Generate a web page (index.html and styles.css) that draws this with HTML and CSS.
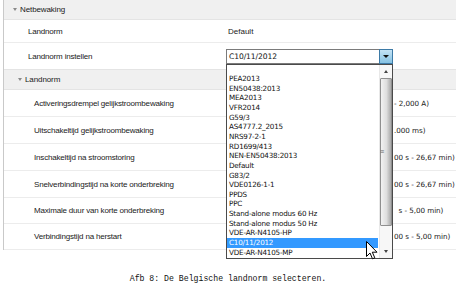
FILE: index.html
```html
<!DOCTYPE html>
<html lang="nl">
<head>
    <meta charset="UTF-8">
    <title>Netbewaking</title>
    <link rel="stylesheet" href="styles.css">
</head>
<body>
    <div class="panel">
        <div class="group-head"><span class="caret"></span>Netbewaking</div>
        <div class="row first">
            <div class="label">Landnorm</div>
            <div class="value">Default</div>
        </div>
        <div class="row combo-row">
            <div class="label">Landnorm instellen</div>
            <div class="value">
                <div class="combo">
                    <span class="combo-text">C10/11/2012</span>
                    <span class="combo-btn"><span class="arrow-down"></span></span>

                    <div class="dropdown">
                        <ul class="options">
                            <li>&nbsp;</li>
                            <li>PEA2013</li>
                            <li>EN50438:2013</li>
                            <li>MEA2013</li>
                            <li>VFR2014</li>
                            <li>G59/3</li>
                            <li>AS4777.2_2015</li>
                            <li>NRS97-2-1</li>
                            <li>RD1699/413</li>
                            <li>NEN-EN50438:2013</li>
                            <li>Default</li>
                            <li>G83/2</li>
                            <li>VDE0126-1-1</li>
                            <li>PPDS</li>
                            <li>PPC</li>
                            <li>Stand-alone modus 60 Hz</li>
                            <li>Stand-alone modus 50 Hz</li>
                            <li>VDE-AR-N4105-HP</li>
                            <li class="selected">C10/11/2012</li>
                            <li>VDE-AR-N4105-MP</li>
                        </ul>
                        <div class="scrollbar">
                            <span class="sb-arrow up"></span>
                            <div class="sb-track">
                                <div class="sb-thumb"><span class="grip">≡</span></div>
                            </div>
                            <span class="sb-arrow down"></span>
                        </div>
                        <svg class="cursor" width="12" height="19" viewBox="0 0 12 19">
                            <path d="M0.5 0.5 L0.5 15.5 L4 12 L6.5 17.8 L8.8 16.8 L6.3 11.2 L11 11.2 Z" fill="#fff" stroke="#000" stroke-width="1" stroke-linejoin="round"/>
                        </svg>
                    </div>
                </div>
            </div>
        </div>
        <div class="group-head sub"><span class="caret"></span>Landnorm</div>
        <div class="row child">
            <div class="label">Activeringsdrempel gelijkstroombewaking</div>
            <div class="value tail">- 2,000 A)</div>
        </div>
        <div class="row child">
            <div class="label">Uitschakeltijd gelijkstroombewaking</div>
            <div class="value tail">.000 ms)</div>
        </div>
        <div class="row child">
            <div class="label">Inschakeltijd na stroomstoring</div>
            <div class="value tail">00 s - 26,67 min)</div>
        </div>
        <div class="row child">
            <div class="label">Snelverbindingstijd na korte onderbreking</div>
            <div class="value tail">00 s - 26,67 min)</div>
        </div>
        <div class="row child short">
            <div class="label">Maximale duur van korte onderbreking</div>
            <div class="value tail">&nbsp; s - 5,00 min)</div>
        </div>
        <div class="row child short">
            <div class="label">Verbindingstijd na herstart</div>
            <div class="value tail">00 s - 5,00 min)</div>
        </div>
    </div>

    <p class="caption">Afb 8: De Belgische landnorm selecteren.</p>
</body>
</html>
```

FILE: styles.css
```css
* {
    margin: 0;
    padding: 0;
    box-sizing: border-box;
}

body {
    background: #fff;
    font-family: 'Liberation Sans', Arial, sans-serif;
    font-size: 8px;
    color: #1a1a1a;
    width: 456px;
    overflow: hidden;
}

.panel {
    margin-left: 3px;
    border-left: 1px solid #c9c9c9;
    display: flex;
    flex-direction: column;
}

/* section headers */
.group-head {
    height: 20px;
    display: flex;
    align-items: center;
    padding-left: 9px;
    background: #f0f0f0;
    border-bottom: 1px solid #e4e4e4;
    letter-spacing: -0.1px;
}

.group-head.sub {
    height: 21px;
    padding-left: 14px;
    border-top: 1px solid #e4e4e4;
}

.caret {
    width: 0;
    height: 0;
    border-left: 2.5px solid transparent;
    border-right: 2.5px solid transparent;
    border-top: 3px solid #8a8a8a;
    margin-right: 3px;
}

/* property rows */
.row {
    display: grid;
    grid-template-columns: 223px 1fr;
    align-items: center;
    height: 27px;
    border-bottom: 1px solid #ececec;
    white-space: nowrap;
}

.row.first {
    height: 23px;
}

.row.combo-row {
    height: 26px;
    border-bottom: none;
}

.row.short {
    height: 26px;
}

.label {
    padding-left: 24px;
    letter-spacing: -0.18px;
}

.row.child .label {
    padding-left: 30px;
}

.value {
    padding-left: 1px;
}

/* only the end of these values shows past the open list */
.value.tail {
    padding-left: 167px;
    font-family: 'DejaVu Sans', sans-serif;
    font-size: 7.2px;
    letter-spacing: -0.05px;
}

/* combo box */
.combo {
    position: relative;
    margin-left: -2px;
    width: 167px;
    height: 15px;
    border: 1px solid #7b7b7b;
    display: flex;
    align-items: center;
    background: #fff;
}

.combo-text {
    flex: 1;
    padding-left: 2px;
    font-family: 'DejaVu Sans', sans-serif;
    font-size: 7.6px;
    letter-spacing: -0.1px;
    color: #111;
}

.combo-btn {
    width: 14px;
    height: 15px;
    margin: -1px -1px -1px 0;
    border: 1px solid #3d7aa6;
    background: linear-gradient(#c4e3f5, #86c2e3);
    display: flex;
    align-items: center;
    justify-content: center;
}

.arrow-down {
    width: 0;
    height: 0;
    border-left: 3px solid transparent;
    border-right: 3px solid transparent;
    border-top: 3px solid #111;
}

/* dropdown list, lies over the rows below */
.dropdown {
    position: absolute;
    top: 14px;
    left: -1px;
    width: 167px;
    height: 195px;
    border: 1px solid #4a4a4a;
    background: #fff;
    display: flex;
    z-index: 2;
}

.options {
    list-style: none;
    flex: 1;
    font-family: 'DejaVu Sans', sans-serif;
    font-size: 7.2px;
    letter-spacing: -0.2px;
    color: #111;
}

.options li {
    height: 9.65px;
    line-height: 9.65px;
    padding-left: 2px;
    margin-right: 1px;
}

.options li.selected {
    background: #3399ff;
    color: #fff;
}

.scrollbar {
    width: 13px;
    display: flex;
    flex-direction: column;
    align-items: center;
    background: #f7f7f7;
    border-left: 1px solid #e8e8e8;
}

.sb-arrow {
    width: 0;
    height: 0;
    border-left: 2.5px solid transparent;
    border-right: 2.5px solid transparent;
    margin: 5px 0;
}

.sb-arrow.up {
    border-bottom: 3px solid #444;
}

.sb-arrow.down {
    border-top: 3px solid #444;
    margin-top: auto;
}

.sb-track {
    width: 100%;
    height: 148px;
}

.sb-thumb {
    height: 100%;
    border: 1px solid #8f8f8f;
    border-radius: 1px;
    background: linear-gradient(to right, #f2f2f2, #dedede 55%, #a9a9a9);
    display: flex;
    align-items: center;
}

.grip {
    font-size: 7px;
    line-height: 1;
    color: #666;
    margin-left: -1px;
}

.cursor {
    position: absolute;
    left: 139px;
    top: 176px;
}

.caption {
    margin-top: 24px;
    text-align: center;
    font-family: 'Liberation Mono', 'DejaVu Sans Mono', monospace;
    font-size: 8.2px;
    color: #111;
}
```
